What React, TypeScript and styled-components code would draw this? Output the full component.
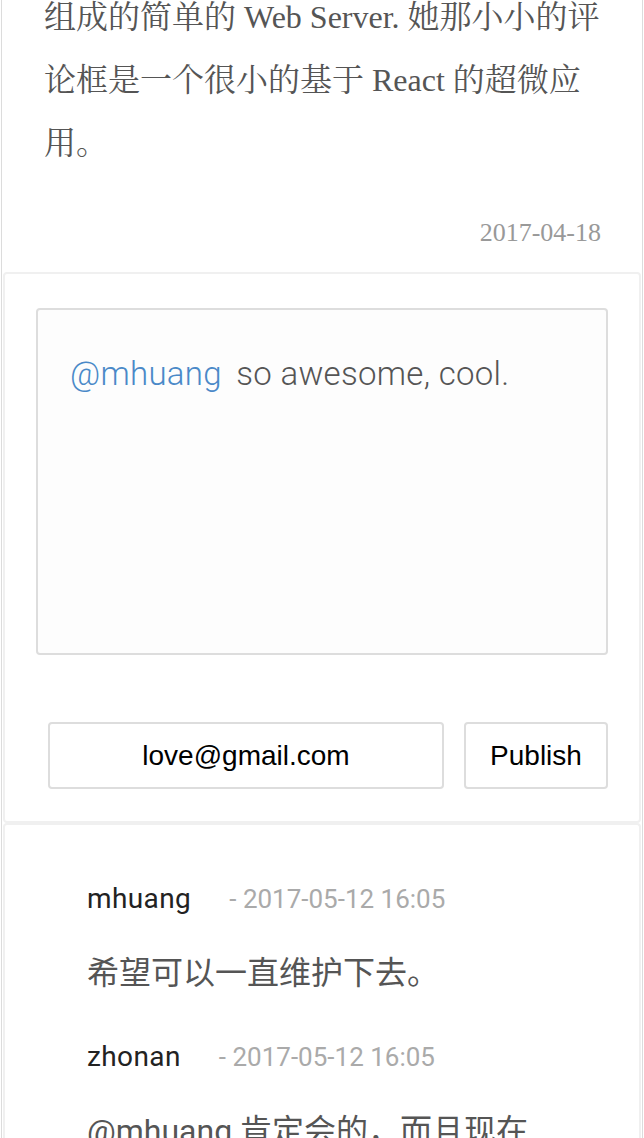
import React from "react";
import styled, { createGlobalStyle } from "styled-components";

const GlobalStyle = createGlobalStyle`
  html, body {
    margin: 0;
    padding: 0;
    background: #fff;
  }
  body {
    overflow: hidden;
  }
`;

const serif = `"Liberation Serif", "Noto Serif CJK SC", "Noto Sans CJK SC", serif`;
const sans = `Roboto, "Noto Sans CJK SC", sans-serif`;

const Frame = styled.div`
  margin: 0 1px;
  padding: 0 1px;
  border-left: 1px solid #dcdcdc;
  border-right: 1px solid #dcdcdc;
  min-height: 100vh;
  box-sizing: border-box;
`;

const Article = styled.article`
  padding: 0 40px 19px 41px;
`;

const Paragraph = styled.p`
  margin: -14px 0 0;
  font-family: ${serif};
  font-size: 32px;
  line-height: 63px;
  color: #555;
`;

const PostDate = styled.div`
  margin-top: 38px;
  text-align: right;
  font-family: ${serif};
  font-size: 26px;
  line-height: 40px;
  color: #999;
`;

const Card = styled.section<{ $open?: boolean }>`
  border: 2px solid #f0f0f0;
  border-bottom: ${(p) => (p.$open ? "none" : "2px solid #f0f0f0")};
  border-radius: 4px;
  box-sizing: border-box;
`;

const FormCard = styled(Card)`
  padding: 34px 31px 32px;
`;

const Editor = styled.div`
  height: 347px;
  box-sizing: border-box;
  border: 2px solid #ddd;
  border-radius: 4px;
  background: #fdfdfd;
  padding: 40px 32px;
  font-family: ${sans};
  font-weight: 300;
  font-size: 33px;
  letter-spacing: 0.3px;
  line-height: 48px;
  color: #555;
`;

const Mention = styled.span`
  color: #4a89c8;
  margin-right: 6px;
`;

const ActionRow = styled.div`
  display: flex;
  gap: 20px;
  margin-top: 67px;
  padding-left: 12px;
`;

const boxed = `
  height: 67px;
  box-sizing: border-box;
  border: 2px solid #ddd;
  border-radius: 4px;
  background: #fff;
  color: #000;
  font-family: "Liberation Sans", Arial, sans-serif;
  font-size: 28px;
  text-align: center;
  padding: 0;
  outline: none;
`;

const EmailInput = styled.input`
  ${boxed}
  flex: 0 0 396px;
  width: 396px;
`;

const PublishButton = styled.button`
  ${boxed}
  flex: 0 0 144px;
  width: 144px;
`;

const ListCard = styled(Card)`
  padding: 54px 90px 0 82px;
  border-radius: 4px 4px 0 0;
`;

const CommentItem = styled.div`
  margin-bottom: 40px;
`;

const CommentHead = styled.div`
  display: flex;
  align-items: baseline;
  line-height: 40px;
  font-family: ${sans};
`;

const Author = styled.span`
  font-size: 28px;
  letter-spacing: 0.4px;
  color: #222;
`;

const Stamp = styled.span`
  margin-left: 38px;
  font-size: 26px;
  color: #aaa;
`;

const CommentBody = styled.div`
  margin-top: 30px;
  font-family: ${sans};
  font-size: 32px;
  line-height: 48px;
  color: #555;
`;

const comments = [
  { id: 1, author: "mhuang", time: "2017-05-12 16:05", text: "希望可以一直维护下去。" },
  { id: 2, author: "zhonan", time: "2017-05-12 16:05", text: "@mhuang 肯定会的，而且现在会越来越好用的。" },
];

export default function App() {
  return (
    <>
      <GlobalStyle />
      <Frame>
        <Article>
          <Paragraph>
            组成的简单的 Web Server. 她那小小的评<br />
            论框是一个很小的基于 React 的超微应<br />
            用。
          </Paragraph>
          <PostDate>2017-04-18</PostDate>
        </Article>

        <FormCard>
          <Editor>
            <Mention>@mhuang</Mention> so awesome, cool.
          </Editor>
          <ActionRow>
            <EmailInput readOnly value="love@gmail.com" />
            <PublishButton>Publish</PublishButton>
          </ActionRow>
        </FormCard>

        <ListCard $open>
          {comments.map((c) => (
            <CommentItem key={c.id}>
              <CommentHead>
                <Author>{c.author}</Author>
                <Stamp>- {c.time}</Stamp>
              </CommentHead>
              <CommentBody>{c.text}</CommentBody>
            </CommentItem>
          ))}
        </ListCard>
      </Frame>
    </>
  );
}
